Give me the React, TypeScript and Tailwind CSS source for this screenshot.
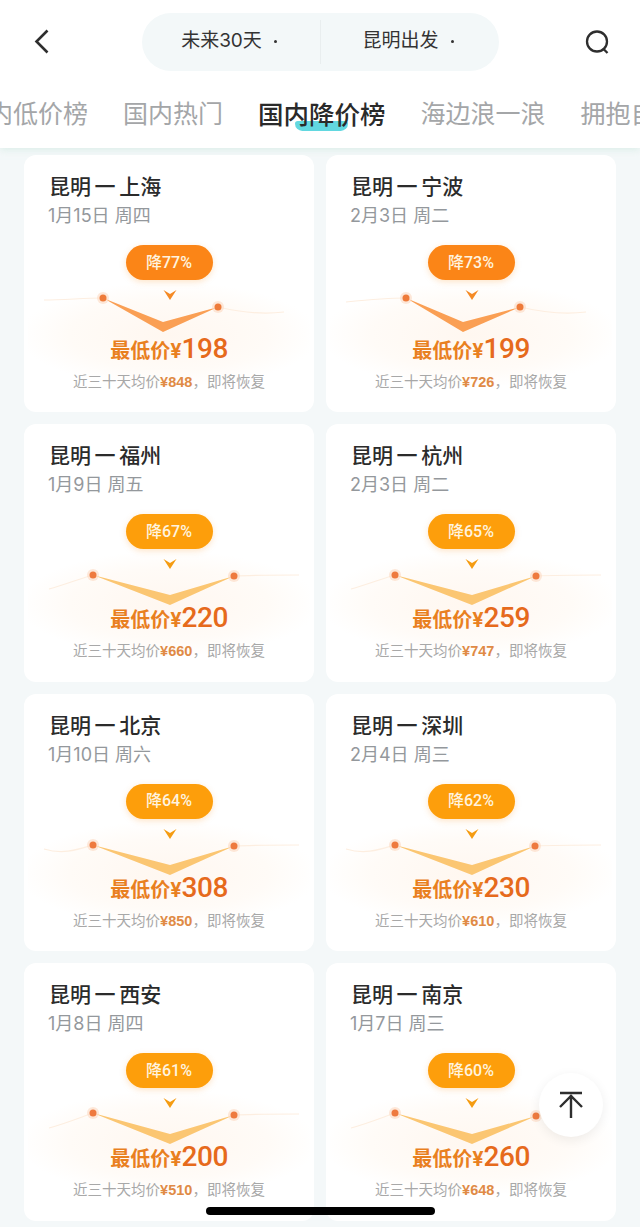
import React from 'react';

const deals = [
  { to: '上海', date: '1月15日 周四', off: 77, price: 198, avg: 848, deep: true, lx: 79, ly: 18, rx: 194, ry: 27, bx: 139, faint: 'M20 20 C40 20 60 18 79 18 M194 27 C215 32 235 35 260 32' },
  { to: '宁波', date: '2月3日 周二', off: 73, price: 199, avg: 726, deep: true, lx: 80, ly: 18, rx: 194, ry: 27, bx: 137, faint: 'M20 22 C40 20 60 18 80 18 M194 27 C215 32 235 35 260 32' },
  { to: '福州', date: '1月9日 周五', off: 67, price: 220, avg: 660, deep: false, lx: 69, ly: 26, rx: 210, ry: 27, bx: 146, faint: 'M25 40 C40 36 55 30 69 26 M210 27 C230 26 250 26 275 26' },
  { to: '杭州', date: '2月3日 周二', off: 65, price: 259, avg: 747, deep: false, lx: 69, ly: 26, rx: 210, ry: 27, bx: 146, faint: 'M25 40 C40 36 55 30 69 26 M210 27 C230 26 250 26 275 26' },
  { to: '北京', date: '1月10日 周六', off: 64, price: 308, avg: 850, deep: false, lx: 69, ly: 26, rx: 210, ry: 27, bx: 146, faint: 'M20 30 C40 36 55 30 69 26 M210 27 C230 26 250 26 275 26' },
  { to: '深圳', date: '2月4日 周三', off: 62, price: 230, avg: 610, deep: false, lx: 69, ly: 26, rx: 209, ry: 27, bx: 146, faint: 'M20 30 C40 36 55 30 69 26 M209 27 C230 26 250 26 275 26' },
  { to: '西安', date: '1月8日 周四', off: 61, price: 200, avg: 510, deep: false, lx: 69, ly: 25, rx: 210, ry: 27, bx: 146, faint: 'M25 40 C40 36 55 30 69 25 M210 27 C230 26 250 26 275 26' },
  { to: '南京', date: '1月7日 周三', off: 60, price: 260, avg: 648, deep: false, lx: 69, ly: 25, rx: 210, ry: 28, bx: 146, faint: 'M25 40 C40 36 55 30 69 25 M210 28 C230 26 250 26 275 26' }
];

const tabs = ['国内低价榜', '国内热门', '国内降价榜', '海边浪一浪', '拥抱自然'];

const Card = ({ deal }: { deal: (typeof deals)[number] }) => {
  const pill = deal.deep ? 'bg-[#fb8517]' : 'bg-[#fd9e0b]';
  const arrow = deal.deep ? '#f58a25' : '#f59c12';
  const fill = deal.deep ? '#fa9f54' : '#fbc672';
  const dot = deal.deep ? '#ee7b3a' : '#ee7a3f';
  return (
    <div className="relative h-[257.4px] overflow-hidden rounded-[12px] bg-white">
      <div className="absolute inset-x-1 top-[130px] h-[100px] bg-[radial-gradient(ellipse_at_center,#fff7f0_0%,#fffbf7_50%,#ffffff_75%)]" />
      <div className="relative flex h-full flex-col">
        <div className="pl-[25px] pt-[17px] text-[21px] leading-[30px] font-medium text-[#2b2b2b] [word-spacing:-2px]">
          昆明 一 {deal.to}
        </div>
        <div className="mt-[2px] pl-[24px] text-[18px] leading-[24px] text-[#94989c]">{deal.date}</div>
        <div className={`mt-[17px] flex h-[35px] w-[87px] items-center justify-center self-center rounded-full font-['Roboto','Noto_Sans_CJK_SC',sans-serif] text-[16px] font-medium text-[#fff3df] shadow-[0_2px_6px_rgba(251,150,40,0.25)] ${pill}`}>
          降{deal.off}%
        </div>
        <svg width="290" height="55" viewBox="0 0 290 55" className="block overflow-visible">
          <path d={deal.faint} fill="none" stroke="#fdeee0" strokeWidth="1.2" />
          <path
            d={`M${deal.lx} ${deal.ly} L${deal.bx} ${deal.deep ? 52 : 56} L${deal.rx} ${deal.ry} L${deal.bx} ${deal.deep ? 42 : 46} Z`}
            fill={fill}
          />
          <path d="M139.5 10 L146 14 L152.5 10 L146 20 Z" fill={arrow} />
          <circle cx={deal.lx} cy={deal.ly} r="6" fill="#fbd9c2" opacity="0.6" />
          <circle cx={deal.rx} cy={deal.ry} r="6" fill="#fbd9c2" opacity="0.6" />
          <circle cx={deal.lx} cy={deal.ly} r="3.5" fill={dot} />
          <circle cx={deal.rx} cy={deal.ry} r="3.5" fill={dot} />
        </svg>
        <div className="relative flex items-baseline justify-center font-bold text-[#e9801f]">
          <span className="text-[20px] leading-[28px]">最低价¥</span>
          <span className="font-['Roboto'] text-[28px] leading-[28px] font-medium tracking-[-0.5px] text-[#e66a1c]">{deal.price}</span>
        </div>
        <div className="mt-[7px] flex items-baseline justify-center text-[14.5px] leading-[20px] text-[#a8a8a8]">
          近三十天均价
          <span className="font-['Liberation_Sans'] text-[14.5px] font-bold text-[#e08a45]">¥{deal.avg}</span>
          ，即将恢复
        </div>
      </div>
    </div>
  );
};

export default function App() {
  return (
    <div className="relative h-[1227px] w-[640px] overflow-hidden bg-[#f4f8f9] font-['Inter','Noto_Sans_CJK_SC',sans-serif]">
      <div className="relative bg-white shadow-[0_2px_7px_rgba(205,232,224,0.6)]">
        <div className="flex h-[83px] items-center justify-between pl-[34px] pr-[30px]">
          <svg width="15" height="25" viewBox="0 0 15 25" fill="none" stroke="#2e2e2e" strokeWidth="2.6">
            <path d="M13.5 1.5 L2.5 12.5 L13.5 23.5" />
          </svg>
          <div className="ml-[7px] flex h-[58px] w-[357px] items-center rounded-full bg-[#f3f8f9] text-[19px] text-[#333]">
            <div className="flex h-[44px] flex-1 items-center justify-center gap-[12px] border-r border-[#e9eeef] pr-[4px]">
              未来30天<span className="h-[3px] w-[3px] rounded-full bg-[#333]" />
            </div>
            <div className="flex flex-1 items-center justify-center gap-[12px] pr-[4px]">
              昆明出发<span className="h-[3px] w-[3px] rounded-full bg-[#333]" />
            </div>
          </div>
          <svg width="25" height="24" viewBox="0 0 25 24" fill="none" stroke="#2e2e2e" strokeWidth="2.3">
            <circle cx="12" cy="11.5" r="10" />
            <path d="M18 18.5 L22.5 23" />
          </svg>
        </div>
        <div className="relative ml-[-37px] flex h-[65px] gap-[35px] whitespace-nowrap text-[25px] text-[#a4a6a8]">
          {tabs.map((tab, index) =>
            index === 2 ? (
              <span key={tab} className="relative pt-[13px]">
                <span className="absolute left-[37px] top-[38px] h-[10px] w-[53px] rounded-b-[8px] rounded-t-[3px] bg-[#62d8e0]" />
                <span className="relative text-[25.5px] font-medium text-[#2a2a2a]">{tab}</span>
              </span>
            ) : (
              <span key={tab} className="pt-[13px]">{tab}</span>
            )
          )}
        </div>
      </div>
      <div className="grid grid-cols-[290px_290px] gap-x-[12px] gap-y-[12px] pl-[24px] pt-[7px]">
        {deals.map(deal => (
          <Card key={deal.to} deal={deal} />
        ))}
      </div>
      <button className="absolute left-[539px] top-[1073px] flex h-[64px] w-[64px] items-center justify-center rounded-full bg-white shadow-[0_3px_12px_rgba(0,0,0,0.07)]">
        <svg width="26" height="28" viewBox="0 0 26 28" fill="none" stroke="#2e2e2e" strokeWidth="2.4">
          <path d="M2 2 H24 M13 27 V4 M2 16 L13 5 L24 16" />
        </svg>
      </button>
      <div className="absolute left-[206px] top-[1207px] h-[8px] w-[229px] rounded-full bg-black" />
    </div>
  );
}
